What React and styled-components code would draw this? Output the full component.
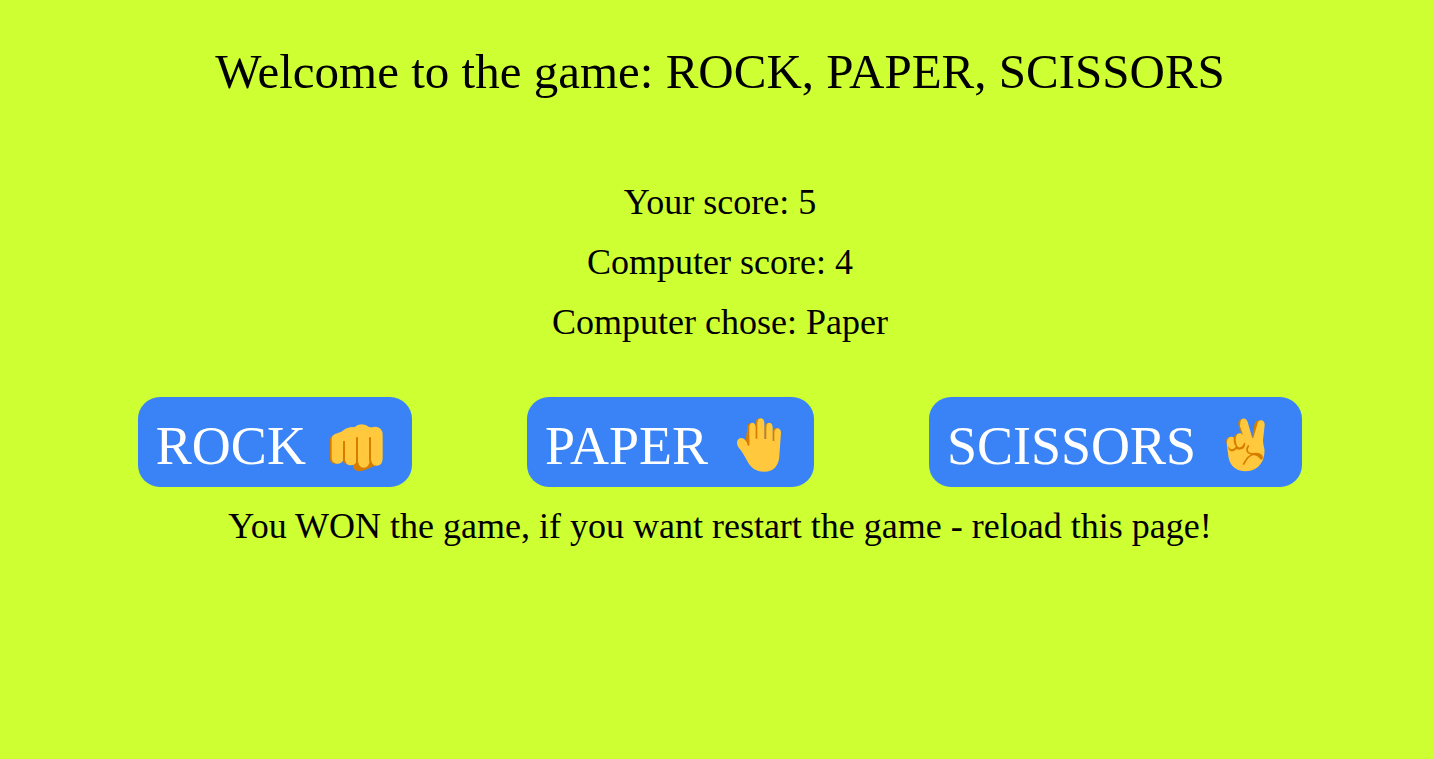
import React from 'react';
import styled, { createGlobalStyle } from 'styled-components';

const GlobalStyle = createGlobalStyle`
  body {
    margin: 0;
    background: #ceff32;
    color: #000;
    font-family: "Liberation Serif", "Times New Roman", serif;
  }
`;

const Page = styled.main`
  display: flex;
  flex-direction: column;
  align-items: center;
  padding: 42px 0 42px 6px;
  text-align: center;
`;

const Title = styled.h1`
  margin: 0 0 70px;
  font-size: 49px;
  font-weight: 400;
  line-height: 60px;
`;

const Line = styled.p`
  margin: 0;
  font-size: 36px;
  line-height: 60px;
`;

const Choices = styled.div`
  display: flex;
  flex-wrap: wrap;
  justify-content: center;
  gap: 16px 115px;
  margin: 45px 0 9px;
`;

const ChoiceButton = styled.button`
  display: flex;
  align-items: center;
  gap: 14px;
  height: 90px;
  padding: 8px 18px 0;
  border: 0;
  border-radius: 22px;
  background: #3983f6;
  color: #fff;
  font-family: inherit;
  font-size: 54px;
  line-height: 60px;
  cursor: pointer;
`;

const HandIcon = styled.svg`
  flex: none;
  width: 74px;
  height: 70px;
`;

const SKIN = '#ffc83d';
const SHADE = '#d67d00';

const Fist = () => (
  <HandIcon viewBox="0 3 222 210" aria-hidden="true">
    <path fill={SHADE} d="M98 160C98 176 105 184 119 184C128 184 151 174 168 166L150 142L100 150Z" />
    <path fill={SHADE} d="M30 88Q31 79 42 75L52 80V160C39 164 30 158 30 146Z" />
    <path
      fill={SKIN}
      d="M35 84Q36 76 45 72L64 65Q76 54 90 52L104 51Q112 43 125 43Q138 43 147 51Q155 53 164 50Q188 50 188 76V143C188 158 182 167 170 167C158 167 153 159 153 147L149 149C149 163 142 173 131 173C119 173 114 164 114 151L109 154C108 162 101 166 92 166C80 166 75 158 75 147L70 150C66 158 61 161 54 161C41 161 35 154 35 143Z"
    />
    <path fill={SHADE} d="M69 95Q69 92 72 92Q75 92 75 95V152Q76 160 82 164Q69 161 69 146Z" />
    <path fill={SHADE} d="M108 84Q108 81 111 81Q114 81 114 84V156Q115 166 122 171Q108 168 108 152Z" />
    <path fill={SHADE} d="M147 84Q147 81 150 81Q153 81 153 84V151Q154 161 161 165Q147 162 147 147Z" />
  </HandIcon>
);

const Palm = () => (
  <HandIcon viewBox="-10 3 222 210" aria-hidden="true">
    <path fill={SHADE} d="M66 54Q66 39 77 39L83 50L73 110L60 98Z" />
    <path fill={SHADE} d="M90 39Q91 25 104 25L108 36V89H90Z" />
    <path fill={SHADE} d="M117 52Q118 39 129 38L134 48V90H117Z" />
    <path fill={SHADE} d="M141 66Q143 54 154 54L159 64V96H141Z" />
    <path
      fill={SKIN}
      d="M35 98C35 84 51 78 60 91L69 105Q71 108 72 104V52C72 34 91 34 91 52V86H96V39C96 20 117 20 117 39V87H123V51C123 33 142 34 142 52V93H147V68C147 50 167 50 167 68L162 137C161 168 143 185 117 185C91 185 78 175 66 154C57 138 52 128 44 118C38 111 35 105 35 98Z"
    />
    <path d="M69 86V105" fill="none" stroke={SHADE} strokeWidth="5" strokeLinecap="round" />
  </HandIcon>
);

const Victory = () => (
  <HandIcon viewBox="0 3 222 210" aria-hidden="true">
    <path fill={SHADE} d="M85 44Q83 28 97 26L105 40L121 84L97 81Z" />
    <path fill={SHADE} d="M133 45Q135 31 149 31L151 49L140 94L126 86Z" />
    <path fill={SHADE} d="M48 96Q48 82 58 81L68 91L55 110Z" />
    <path
      fill={SKIN}
      d="M91 37C92 22 109 21 113 36L127 84H130L142 43C144 24 166 29 164 46L159 91Q159 102 163 116C165 132 160 149 155 157C145 175 127 184 107 184C82 184 62 171 56 145L51 108C49 91 54 80 64 80Q72 80 75 87C77 74 84 69 92 70L99 74L90 49Z"
    />
    <path fill={SHADE} d="M71 92Q70 74 84 70Q76 78 77 91L80 105L76 108Q72 102 71 92Z" />
    <path fill={SHADE} d="M53 106Q58 119 67 118Q76 116 78 105L80 105Q84 114 91 112Q98 110 103 98L106 99Q105 116 94 118Q86 121 80 117Q71 126 63 124Q55 121 53 106Z" />
    <path
      d="M115 108Q107 120 115 128Q123 133 133 132Q117 137 111 146L101 162"
      fill="none"
      stroke={SHADE}
      strokeWidth="5"
      strokeLinecap="round"
      strokeLinejoin="round"
    />
    <path fill={SHADE} d="M124 130Q149 124 158 138Q160 145 156 149Q150 149 147 143Q140 135 126 135Z" />
  </HandIcon>
);

const CHOICES = [
  { name: 'ROCK', Icon: Fist },
  { name: 'PAPER', Icon: Palm },
  { name: 'SCISSORS', Icon: Victory },
];

export default function App() {
  return (
    <>
      <GlobalStyle />
      <Page>
        <Title>Welcome to the game: ROCK, PAPER, SCISSORS</Title>
        <Line>Your score: 5</Line>
        <Line>Computer score: 4</Line>
        <Line>Computer chose: Paper</Line>
        <Choices>
          {CHOICES.map(({ name, Icon }) => (
            <ChoiceButton key={name} type="button">
              {name}
              <Icon />
            </ChoiceButton>
          ))}
        </Choices>
        <Line>You WON the game, if you want restart the game - reload this page!</Line>
      </Page>
    </>
  );
}
